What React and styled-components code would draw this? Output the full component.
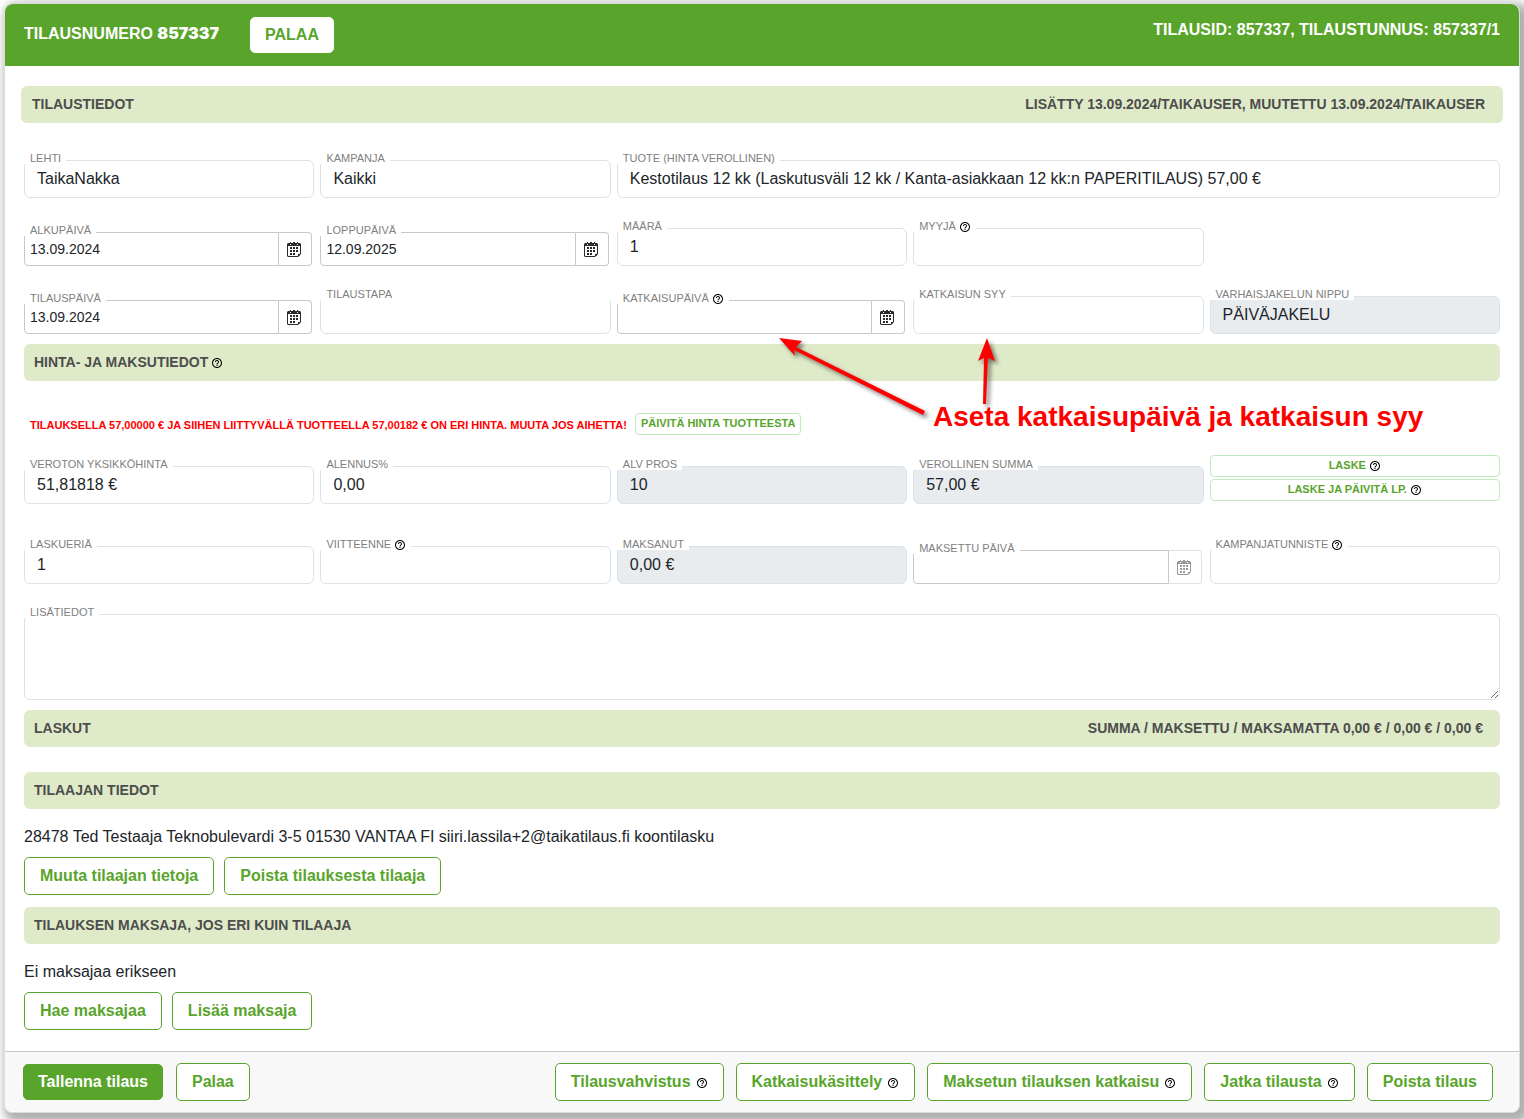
import React, { useState } from 'react';
import styled, { createGlobalStyle, css, ThemeProvider } from 'styled-components';
import { MdHelpOutline } from 'react-icons/md';

const theme = {
    colors: {
        green: '#59a52c',
        lightGreen: '#dfebc8',
        paleGreen: '#bfeabb',
        text: '#212529',
        label: '#808080',
        heading: '#4d4d4d',
        border: '#dee2e6',
        dateBorder: '#c8c8c8',
        disabled: '#e9ecef',
        footer: '#f8f8f8',
        red: '#ff0000',
    },
    font: {
        xs: '11px',
        s: '14px',
        m: '16px',
        xl: '28px',
    },
};

const GlobalStyle = createGlobalStyle`
    *, *::before, *::after {
        box-sizing: border-box;
    }

    body {
        margin: 0;
        background-color: #fff;
        overflow-x: hidden;
    }

    body, button, input, textarea {
        font-family: "Liberation Sans", Arial, sans-serif;
    }
`;

const Card = styled.main`
    margin: 3px 4px 6px;
    border: 1px solid #dcdcdc;
    border-radius: 8px;
    background-color: #fff;
    box-shadow: 5px 5px 10px 5px #b0b0b0;
    color: ${({ theme }) => theme.colors.text};
    font-size: ${({ theme }) => theme.font.m};
    line-height: 24px;
`;

const Header = styled.header`
    display: flex;
    align-items: center;
    height: 62px;
    padding: 0 19px;
    border-radius: 8px 8px 0 0;
    background-color: ${({ theme }) => theme.colors.green};
    color: #fff;
    font-weight: bold;
`;

const Title = styled.h1`
    margin: 0 31px 4px 0;
    font-size: ${({ theme }) => theme.font.m};
    line-height: 24px;
`;

const OrderNumber = styled.span`
    font-family: Inter, sans-serif;
    font-weight: 900;
`;

const HeaderInfo = styled.span`
    margin: 0 0 11px auto;
`;

const Button = styled.button`
    display: inline-flex;
    align-items: center;
    justify-content: center;
    height: 38px;
    padding: 0 15px;
    border: 1px solid ${({ theme }) => theme.colors.green};
    border-radius: 5px;
    background-color: #fff;
    color: ${({ theme }) => theme.colors.green};
    font-size: ${({ theme }) => theme.font.m};
    font-weight: bold;
    white-space: nowrap;
    cursor: pointer;

    ${({ $primary }) => $primary && css`
        height: 36px;
        padding: 0 14px;
        background-color: ${({ theme }) => theme.colors.green};
        color: #fff;
    `}

    ${({ $plain }) => $plain && css`
        height: 36px;
        padding: 0 14px;
        border-color: #fff;
    `}

    ${({ $small }) => $small && css`
        height: 22px;
        padding: 0 5px 2px;
        border-color: ${({ theme }) => theme.colors.paleGreen};
        border-radius: 4px;
        font-size: ${({ theme }) => theme.font.xs};
    `}
`;

const Body = styled.div`
    position: relative;
    padding: 20px 19px 21px;
`;

const SectionBar = styled.div`
    display: flex;
    align-items: center;
    justify-content: space-between;
    min-height: 37px;
    margin: ${({ $top = 0 }) => $top}px 0 0;
    padding: 0 17px 2px 10px;
    border-radius: 6px;
    background-color: ${({ theme }) => theme.colors.lightGreen};
    color: ${({ theme }) => theme.colors.heading};
    font-size: ${({ theme }) => theme.font.s};
    font-weight: bold;

    ${({ $wide }) => $wide && css`
        margin: 0 -3px;
        padding: 0 18px 2px 11px;
    `}
`;

const SectionTitle = styled.h2`
    display: flex;
    align-items: center;
    margin: 0;
    font-size: inherit;
    line-height: 24px;
`;

const FieldRow = styled.div`
    display: grid;
    grid-template-columns: repeat(5, minmax(0, 1fr));
    column-gap: 6px;
    align-items: end;
    margin-top: ${({ $top = 30 }) => $top}px;
`;

const FieldWrapper = styled.div`
    position: relative;
    grid-column: span ${({ $span = 1 }) => $span};
`;

// sits on top of the input's upper border
const Label = styled.label`
    position: absolute;
    top: -8px;
    left: 0;
    display: flex;
    align-items: center;
    height: 12px;
    padding: 0 5px 0 6px;
    background-color: #fff;
    color: ${({ theme }) => theme.colors.label};
    font-size: ${({ theme }) => theme.font.xs};
    line-height: 12px;
    white-space: nowrap;

    ${({ $full }) => $full && css`
        width: 100%;
    `}
`;

const Input = styled.input`
    display: block;
    width: 100%;
    height: 38px;
    padding: 0 12px;
    border: 1px solid ${({ theme }) => theme.colors.border};
    border-radius: 6px;
    background-color: #fff;
    color: ${({ theme }) => theme.colors.text};
    font-size: ${({ theme }) => theme.font.m};

    &:disabled {
        background-color: ${({ theme }) => theme.colors.disabled};
    }
`;

const TextArea = styled.textarea`
    display: block;
    width: 100%;
    height: 86px;
    padding: 6px 12px;
    border: 1px solid ${({ theme }) => theme.colors.border};
    border-radius: 6px;
    font-size: ${({ theme }) => theme.font.m};
    resize: vertical;
`;

const DateBox = styled.div`
    display: flex;
    height: 34px;
    margin-right: 2px;
`;

const DateInput = styled(Input)`
    flex: 1;
    min-width: 0;
    height: 34px;
    padding: 0 5px;
    border-color: ${({ theme }) => theme.colors.dateBorder};
    border-radius: 4px 0 0 4px;
    font-size: ${({ theme }) => theme.font.s};
`;

const DateButton = styled.button`
    display: flex;
    align-items: center;
    justify-content: center;
    width: 33px;
    padding: 0 2px 0 0;
    border: 1px solid ${({ theme }) => theme.colors.dateBorder};
    border-left: 0;
    border-radius: 0 4px 4px 0;
    background-color: #fff;
    color: #2b2b2b;

    &:disabled {
        border-color: ${({ theme }) => theme.colors.border};
        color: #9a9a9a;
    }
`;

const HelpIcon = styled(MdHelpOutline)`
    flex: none;
    width: 12px;
    height: 12px;
    margin: 2px 0 0 ${({ $gap = 3 }) => $gap}px;
    color: #000;
`;

const AlertRow = styled.div`
    display: flex;
    align-items: center;
    gap: 8px;
    margin-top: 32px;
    padding-left: 6px;
`;

const AlertText = styled.p`
    margin: 0;
    padding-top: 2px;
    color: ${({ theme }) => theme.colors.red};
    font-size: ${({ theme }) => theme.font.xs};
    font-weight: bold;
    line-height: 20px;
`;

const ButtonStack = styled.div`
    display: flex;
    flex-direction: column;
    gap: 2px;
    margin: -12px 0 3px;
`;

const Text = styled.p`
    margin: 16px 0 8px;
`;

const Actions = styled.div`
    display: flex;
    gap: 10px;
`;

const Footer = styled.footer`
    display: flex;
    align-items: center;
    justify-content: space-between;
    padding: 11px 26px 11px 18px;
    border-top: 1px solid #c8c8c8;
    border-radius: 0 0 8px 8px;
    background-color: ${({ theme }) => theme.colors.footer};
`;

const FooterGroup = styled.div`
    display: flex;
    align-items: center;
    gap: ${({ $gap = 12 }) => $gap}px;
`;

const Annotation = styled.div`
    position: absolute;
    top: 272px;
    left: 770px;
    color: ${({ theme }) => theme.colors.red};
    pointer-events: none;
`;

const AnnotationArrows = styled.svg`
    display: block;
    filter: drop-shadow(3px 3px 2px rgba(0, 0, 0, .5));
`;

const AnnotationText = styled.strong`
    display: block;
    margin: -7px 0 0 158px;
    font-size: ${({ theme }) => theme.font.xl};
    line-height: 32px;
    white-space: nowrap;
`;

const CalendarIcon = () => (
    <svg width="14" height="15" viewBox="0 0 14 15" fill="currentColor" aria-hidden="true">
        <path
            fillRule="evenodd"
            d="M1 1h2V0h1v1h2V0h2v1h2V0h1v1h2l1 1v10l-3 3H1l-1-1V2zM1 4v9.500l.5.500h9L13 11.500V4zM3 2v1h1V2zM10 2v1h1V2z"
        />
        <path d="M3 5h2v2H3zM6 5h2v2H6zM9 5h2v2H9zM3 8h2v2H3zM6 8h2v2H6zM9 8h2v2H9zM3 11h2v2H3zM6 11h2v2H6zM11 14v-2h2v1l-1 1z" />
    </svg>
);

const Field = ({ id, label, value = '', help, span, full, disabled }) => {
    const [current, setCurrent] = useState(value);

    return (
        <FieldWrapper $span={span}>
            <Input id={id} value={current} disabled={disabled} onChange={(e) => setCurrent(e.target.value)} />
            <Label htmlFor={id} $full={full}>{label}{help && <HelpIcon />}</Label>
        </FieldWrapper>
    );
};

const DateField = ({ id, label, value = '', help, locked }) => {
    const [current, setCurrent] = useState(value);

    return (
        <FieldWrapper>
            <DateBox>
                <DateInput id={id} value={current} readOnly={locked} onChange={(e) => setCurrent(e.target.value)} />
                <DateButton type="button" aria-label={`${label}, kalenteri`} disabled={locked}>
                    <CalendarIcon />
                </DateButton>
            </DateBox>
            <Label htmlFor={id}>{label}{help && <HelpIcon />}</Label>
        </FieldWrapper>
    );
};

const App = () => (
    <ThemeProvider theme={theme}>
        <GlobalStyle />
        <Card>
            <Header>
                <Title>TILAUSNUMERO <OrderNumber>857337</OrderNumber></Title>
                <Button $plain>PALAA</Button>
                <HeaderInfo>TILAUSID: 857337, TILAUSTUNNUS: 857337/1</HeaderInfo>
            </Header>
            <Body>
                <SectionBar $wide>
                    <SectionTitle>TILAUSTIEDOT</SectionTitle>
                    <span>LISÄTTY 13.09.2024/TAIKAUSER, MUUTETTU 13.09.2024/TAIKAUSER</span>
                </SectionBar>
                <FieldRow $top={37}>
                    <Field id="lehti" label="LEHTI" value="TaikaNakka" />
                    <Field id="kampanja" label="KAMPANJA" value="Kaikki" />
                    <Field
                        id="tuote"
                        label="TUOTE (HINTA VEROLLINEN)"
                        value="Kestotilaus 12 kk (Laskutusväli 12 kk / Kanta-asiakkaan 12 kk:n PAPERITILAUS) 57,00 €"
                        span={3}
                    />
                </FieldRow>
                <FieldRow>
                    <DateField id="alkupaiva" label="ALKUPÄIVÄ" value="13.09.2024" />
                    <DateField id="loppupaiva" label="LOPPUPÄIVÄ" value="12.09.2025" />
                    <Field id="maara" label="MÄÄRÄ" value="1" />
                    <Field id="myyja" label="MYYJÄ" help />
                </FieldRow>
                <FieldRow>
                    <DateField id="tilauspaiva" label="TILAUSPÄIVÄ" value="13.09.2024" />
                    <Field id="tilaustapa" label="TILAUSTAPA" full />
                    <DateField id="katkaisupaiva" label="KATKAISUPÄIVÄ" help />
                    <Field id="katkaisunsyy" label="KATKAISUN SYY" />
                    <Field id="nippu" label="VARHAISJAKELUN NIPPU" value="PÄIVÄJAKELU" disabled />
                </FieldRow>

                <SectionBar $top={10}>
                    <SectionTitle>HINTA- JA MAKSUTIEDOT<HelpIcon /></SectionTitle>
                </SectionBar>
                <AlertRow>
                    <AlertText>
                        TILAUKSELLA 57,00000 € JA SIIHEN LIITTYVÄLLÄ TUOTTEELLA 57,00182 € ON ERI HINTA. MUUTA JOS AIHETTA!
                    </AlertText>
                    <Button $small>PÄIVITÄ HINTA TUOTTEESTA</Button>
                </AlertRow>
                <FieldRow $top={31}>
                    <Field id="yksikkohinta" label="VEROTON YKSIKKÖHINTA" value="51,81818 €" />
                    <Field id="alennus" label="ALENNUS%" value="0,00" />
                    <Field id="alv" label="ALV PROS" value="10" disabled />
                    <Field id="summa" label="VEROLLINEN SUMMA" value="57,00 €" disabled />
                    <ButtonStack>
                        <Button $small>LASKE<HelpIcon /></Button>
                        <Button $small>LASKE JA PÄIVITÄ LP.<HelpIcon /></Button>
                    </ButtonStack>
                </FieldRow>
                <FieldRow $top={42}>
                    <Field id="laskueria" label="LASKUERIÄ" value="1" />
                    <Field id="viitteenne" label="VIITTEENNE" help />
                    <Field id="maksanut" label="MAKSANUT" value="0,00 €" disabled />
                    <DateField id="maksettu" label="MAKSETTU PÄIVÄ" locked />
                    <Field id="kampanjatunniste" label="KAMPANJATUNNISTE" help />
                </FieldRow>
                <FieldRow>
                    <FieldWrapper $span={5}>
                        <TextArea id="lisatiedot" />
                        <Label htmlFor="lisatiedot">LISÄTIEDOT</Label>
                    </FieldWrapper>
                </FieldRow>

                <SectionBar $top={10}>
                    <SectionTitle>LASKUT</SectionTitle>
                    <span>SUMMA / MAKSETTU / MAKSAMATTA 0,00 € / 0,00 € / 0,00 €</span>
                </SectionBar>

                <SectionBar $top={25}>
                    <SectionTitle>TILAAJAN TIEDOT</SectionTitle>
                </SectionBar>
                <Text>28478 Ted Testaaja Teknobulevardi 3-5 01530 VANTAA FI siiri.lassila+2@taikatilaus.fi koontilasku</Text>
                <Actions>
                    <Button>Muuta tilaajan tietoja</Button>
                    <Button>Poista tilauksesta tilaaja</Button>
                </Actions>

                <SectionBar $top={12}>
                    <SectionTitle>TILAUKSEN MAKSAJA, JOS ERI KUIN TILAAJA</SectionTitle>
                </SectionBar>
                <Text>Ei maksajaa erikseen</Text>
                <Actions>
                    <Button>Hae maksajaa</Button>
                    <Button>Lisää maksaja</Button>
                </Actions>

                <Annotation>
                    <AnnotationArrows width="230" height="70" viewBox="0 0 230 70" overflow="visible">
                        <g fill="currentColor" stroke="none">
                            <path d="M4 0 27 3 21 9 150 73 148 77 19 12 20 18Z" />
                            <path d="M212 0 220 23 213 20 211 66H208L209 20 203 23Z" />
                        </g>
                    </AnnotationArrows>
                    <AnnotationText>Aseta katkaisupäivä ja katkaisun syy</AnnotationText>
                </Annotation>
            </Body>
            <Footer>
                <FooterGroup $gap={13}>
                    <Button $primary>Tallenna tilaus</Button>
                    <Button>Palaa</Button>
                </FooterGroup>
                <FooterGroup>
                    <Button>Tilausvahvistus<HelpIcon $gap={5} /></Button>
                    <Button>Katkaisukäsittely<HelpIcon $gap={5} /></Button>
                    <Button>Maksetun tilauksen katkaisu<HelpIcon $gap={5} /></Button>
                    <Button>Jatka tilausta<HelpIcon $gap={5} /></Button>
                    <Button>Poista tilaus</Button>
                </FooterGroup>
            </Footer>
        </Card>
    </ThemeProvider>
);

export default App;
